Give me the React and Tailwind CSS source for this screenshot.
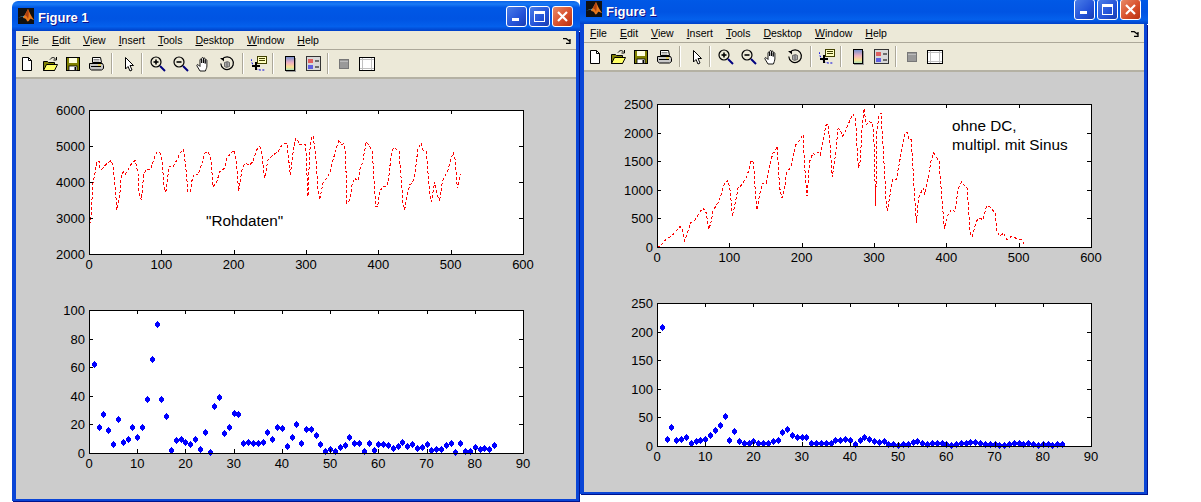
import React from 'react'

const menus = ['File', 'Edit', 'View', 'Insert', 'Tools', 'Desktop', 'Window', 'Help']

// traced from the figures, in 3x crop coordinates
const rawA = [[148,200],[150,355],[153,370],[155,330],[160,250],[165,225],[172,185],[178,183],[181,205],[186,208],[197,195],[205,188],[214,182],[220,195],[225,245],[232,330],[240,290],[245,225],[252,215],[258,222],[270,200],[280,185],[287,182],[295,220],[298,280],[305,300],[312,225],[320,208],[333,210],[345,170],[352,155],[362,160],[368,185],[372,250],[377,275],[380,270],[388,200],[400,200],[412,180],[420,160],[432,148],[438,200],[445,275],[452,275],[458,235],[465,220],[475,225],[485,195],[495,160],[505,155],[512,170],[515,190],[520,260],[530,250],[540,215],[555,205],[563,170],[570,165],[582,150],[590,185],[597,273],[607,210],[615,190],[630,195],[640,185],[650,150],[660,140],[665,150],[675,235],[685,180],[700,165],[715,155],[730,130],[742,130],[752,225]]
const rawB = [[8,170],[18,115],[24,120],[28,135],[40,133],[48,135],[55,290],[60,155],[65,115],[70,108],[78,160],[85,270],[90,300],[100,250],[110,235],[120,220],[130,180],[148,118],[155,135],[162,130],[167,150],[172,310],[180,300],[188,250],[195,235],[205,243],[212,200],[218,190],[230,125],[240,140],[248,155],[258,320],[264,320],[270,275],[280,258],[292,260],[298,225],[305,160],[312,142],[328,152],[340,310],[345,330],[352,290],[360,255],[368,250],[376,220],[385,145],[395,130],[400,150],[410,155],[420,285],[425,305],[435,245],[442,285],[450,300],[458,245],[475,210],[490,157],[497,180],[503,265],[512,222]]
const rawC = [[142,455],[150,455],[160,445],[170,432],[185,425],[200,408],[212,395],[218,405],[225,438],[235,410],[242,385],[255,378],[265,360],[280,340],[290,355],[297,405],[305,380],[310,350],[318,335],[328,320],[345,265],[355,258],[362,290],[368,365],[378,320],[385,280],[395,272],[412,245],[425,197],[432,205],[438,310],[442,345],[450,300],[458,265],[470,265],[480,210],[490,175],[497,170],[502,155],[510,280],[517,310],[527,270],[530,235],[545,215],[558,150],[565,143],[580,120],[582,165],[585,215],[592,305],[600,200],[610,175],[615,180],[625,172],[632,180],[640,135],[650,88],[655,88],[660,135],[668,248],[678,175],[685,102],[692,105],[698,125],[705,115],[715,90],[730,58],[738,75]]
const rawD = [[20,125],[26,220],[32,200],[36,115],[43,42],[50,90],[58,80],[68,85],[72,110],[78,335],[82,110],[88,60],[94,55],[100,150],[105,240],[110,330],[114,350],[120,305],[130,253],[140,255],[150,200],[165,120],[172,112],[178,135],[185,135],[195,310],[200,385],[207,310],[220,280],[225,300],[235,250],[245,195],[252,175],[268,200],[275,290],[284,402],[292,365],[305,345],[316,350],[325,285],[335,262],[352,280],[362,420],[368,425],[380,380],[388,370],[400,375],[410,335],[420,335],[436,355],[442,410],[450,425],[462,415],[472,435],[485,425],[505,433],[515,435],[525,450]]

const trace = (list, ox, oy) => list.map(([x, y]) => [(x - ox) / 3, (y - oy) / 3])
const lineLeft = [...trace(rawA, 148, 30), ...trace(rawB, -602, 30)]
const lineRight = [...trace(rawC, 142, 28), ...trace(rawD, -578, 28)]

const dotsLeft = [62,18,27.5,16,6,23.5,8,9.5,18,11,18,38,66,90,38,26,2,9,9.5,7.5,6,10,2.5,14.5,1,33,39,14,18,28,27.5,7,7.5,7,7,8,14.5,9.5,18.5,17.5,5,11.5,20,7,17,17,12.5,6,1.5,2.5,1.5,4.5,5.5,11,7,7,1.5,7,2,6,6,5.5,3.5,5,8,5,6,3.5,4,6,2,3,3,5.5,7,0.5,7,1.5,1.5,4,3,3.5,3,5.5]
const dotsRight = [208,12,34,10,13,15,5,8,11,13,20,28,37,53,11,27,8,6,6,8,4.5,6,6,8,10,24,29,20,15,15,15,5,5,6,6,6,11,11,13,11,3,10,15,12,8,7,9,3,3,2,3,3,7,9,5,3,5,5,5,4,2,3,5,5,7,7,5,3,3,3,1,1,3,5,5,3,5,3,2,4,3,2,3,3]

function Plot({ h, xTicks, yTicks, line, dots, yMax, className, children }) {
  const w = 434
  const x0 = 73
  const y0 = 10
  const xMax = xTicks[xTicks.length - 1]
  const yMin = yTicks[0]
  const yTop = yTicks[yTicks.length - 1]
  const px = v => x0 + (v / xMax) * w
  const py = v => y0 + h - ((v - yMin) / (yTop - yMin)) * h
  return (
    <svg width="560" height="176" className={`block ${className}`}>
      <rect x={x0} y={y0} width={w} height={h} fill="#fff" />
      {line && (
        <polyline
          points={line.map(([x, y]) => `${x0 + x},${y0 + y}`).join(' ')}
          fill="none"
          stroke="#f00"
          strokeWidth="1"
          strokeDasharray="3 2"
          shapeRendering="crispEdges"
        />
      )}
      {dots && dots.map((v, i) => {
        const cx = Math.round(px(i + 1))
        const cy = Math.round(py(v))
        return <path key={i} d={`M${cx - 2} ${cy - 1}h1v-1h1v-1h1v1h1v1h1v3h-1v1h-1v1h-1v-1h-1v-1h-1z`} fill="#00f" shapeRendering="crispEdges" />
      })}
      <rect x={x0 + 0.5} y={y0 + 0.5} width={w} height={h} fill="none" stroke="#000" shapeRendering="crispEdges" />
      <g stroke="#000" shapeRendering="crispEdges">
        {xTicks.map(t => (
          <path key={t} d={`M${Math.round(px(t)) + 0.5} ${y0 + h}v-4M${Math.round(px(t)) + 0.5} ${y0}v4`} />
        ))}
        {yTicks.map(t => (
          <path key={t} d={`M${x0} ${Math.round(py(t)) + 0.5}h4M${x0 + w} ${Math.round(py(t)) + 0.5}h-4`} />
        ))}
      </g>
      <g fontFamily='"Liberation Sans", sans-serif' fontSize="13" fill="#000">
        {xTicks.map(t => (
          <text key={t} x={px(t)} y={y0 + h + 15} textAnchor="middle">{t}</text>
        ))}
        {yTicks.map(t => (
          <text key={t} x={x0 - 4} y={py(t) + 5} textAnchor="end">{t}</text>
        ))}
      </g>
      <g fontFamily='"Liberation Sans", sans-serif' fontSize="15.3" fill="#000">{children}</g>
    </svg>
  )
}

function Ico({ children }) {
  return (
    <div className="w-[23px] flex justify-center">
      <svg width="16" height="16" viewBox="0 0 16 16">{children}</svg>
    </div>
  )
}

const Sep = ({ className }) => <div className={`w-[2px] h-[21px] bg-white border-l border-[#aca899] ${className}`} />

function Magnifier({ plus }) {
  return (
    <Ico>
      <circle cx="6" cy="6" r="5" fill="#ece9d8" stroke="#000" strokeWidth="1.2" />
      <path d="M3.5 6h5" stroke="#000" strokeWidth="1.6" />
      {plus && <path d="M6 3.5v5" stroke="#000" strokeWidth="1.6" />}
      <path d="M10 10l5 5" stroke="#000080" strokeWidth="2" />
    </Ico>
  )
}

function Toolbar() {
  return (
    <div className="h-[27px] flex items-center -ml-px">
      <Ico><path d="M3.5 1.5h6l3 3v10h-9z" fill="#fff" stroke="#000" /><path d="M9.5 1.5v3h3" fill="none" stroke="#000" /></Ico>
      <Ico>
        <path d="M1.5 5.5h4l1 1h6v8h-11z" fill="#808000" stroke="#000" />
        <path d="M1.5 14.5l3-6h11l-3 6z" fill="#ffff66" stroke="#000" />
        <path d="M8 3.5c2-2.5 4-2.5 5.5-.5M14.5 1v3h-3" fill="none" stroke="#000" />
      </Ico>
      <Ico>
        <rect x="1.5" y="1.5" width="13" height="13" fill="#808000" stroke="#000" />
        <rect x="4" y="2" width="8" height="5" fill="#ffffe0" />
        <rect x="4" y="10" width="8" height="4.5" fill="#fff" stroke="#000" strokeWidth="0.8" />
        <rect x="9.5" y="11" width="1.5" height="3" fill="#000" />
      </Ico>
      <Ico>
        <path d="M4.5 1.5h8l1 5h-9z" fill="#fff" stroke="#000" />
        <path d="M5.5 3.5h6M5.5 5h6" stroke="#888" />
        <path d="M1.5 7.5h13l1 2v3l-2 1.5h-10l-2-1.5z" fill="#c8c8c8" stroke="#000" />
        <path d="M3 10.5h10" stroke="#000" />
        <rect x="10" y="8.5" width="3" height="1" fill="#ffd800" />
      </Ico>
      <Sep className="ml-[4px] mr-[4px]" />
      <Ico><path d="M4.5 1.5v11.5l2.5-2.5 2 4.5 2-1-2-4.5h3.5z" fill="#fff" stroke="#000" /></Ico>
      <Sep className="ml-px mr-[3px]" />
      <Magnifier plus />
      <Magnifier />
      <Ico>
        <path d="M4 15l-3-5c-.6-1.2.6-2 1.500-1L4 10.500V4c0-1.300 1.700-1.300 1.700 0v3V2.500c0-1.300 1.800-1.300 1.800 0V7V3c0-1.300 1.700-1.300 1.700 0v4.500V4.500c0-1.200 1.700-1.200 1.700 0V10c0 2-1 3-1.500 5z" fill="#fff" stroke="#000" strokeWidth="0.9" />
      </Ico>
      <Ico>
        <path d="M3 3.500a6.300 6.300 0 1 1-1.200 4" fill="none" stroke="#000" strokeWidth="1.200" />
        <path d="M1 2h4v3.500z" fill="#000" />
        <path d="M5.500 6.500l3-1 2 1v4l-3 1-2-1z" fill="#aaa" stroke="#444" strokeWidth="0.7" />
        <path d="M8 6v5" stroke="#444" strokeWidth="0.7" />
      </Ico>
      <Sep className="ml-[4px] mr-[3px]" />
      <Ico>
        <path d="M0 3c1 5 3 10 9 11h5" fill="none" stroke="#0000e0" strokeDasharray="2 1.500" />
        <rect x="6.500" y="0.500" width="9" height="7" fill="#ffffc0" stroke="#404000" />
        <path d="M8 2.500h6M8 4.500h6" stroke="#404000" />
        <path d="M5 6v8M1 10h8" stroke="#000" strokeWidth="2" />
      </Ico>
      <Sep className="ml-[2px] mr-[4px]" />
      <Ico>
        <defs>
          <linearGradient id="cbar" x1="0" y1="0" x2="0" y2="1">
            <stop offset="0" stopColor="#6f8fd0" />
            <stop offset="0.45" stopColor="#f0b0c0" />
            <stop offset="0.75" stopColor="#f8e090" />
            <stop offset="1" stopColor="#a0e0c0" />
          </linearGradient>
        </defs>
        <rect x="4" y="2" width="10" height="14" fill="#999" />
        <rect x="3.500" y="0.500" width="9" height="14" fill="url(#cbar)" stroke="#000" />
      </Ico>
      <Ico>
        <rect x="1.500" y="0.500" width="14" height="14" fill="#d8d8d8" stroke="#333" />
        <rect x="3" y="3" width="5" height="4" fill="#e06060" />
        <rect x="3" y="9" width="5" height="4" fill="#6060e0" />
        <path d="M10 5h4M10 11h4" stroke="#000" />
      </Ico>
      <Sep className="ml-[3px] mr-[3px]" />
      <Ico>
        <rect x="3.500" y="3.500" width="9" height="9" fill="#999" stroke="#777" />
        <path d="M4 5.500h8" stroke="#bbb" />
      </Ico>
      <Ico>
        <rect x="0.500" y="1.500" width="15" height="13" fill="#fff" stroke="#000" />
        <path d="M1 3.500h14M1 12.500h14M3.500 2v12M12.500 2v12" stroke="#c0c0c0" />
      </Ico>
    </div>
  )
}

function Figure({ className, titleShift, bodyPad, plots }) {
  return (
    <div className={`absolute w-[568px] h-[501px] flex flex-col ${className}`}>
      <div className="h-[30px] shrink-0 rounded-t-[6px] flex items-center pl-[6px] pr-[7px] bg-[linear-gradient(180deg,#0a62e8_0%,#1a7af5_10%,#0058e6_22%,#0054e3_60%,#0460ec_85%,#0040c8_100%)]">
        <svg width="16" height="16" viewBox="0 0 16 16" className="shrink-0">
          <rect width="16" height="16" fill="#111" />
          <path d="M0 10l4-2 2 2 2-3z" fill="#4aa0d0" />
          <path d="M5 10l5-9c1.500 3 3 7 6 11-2-.5-3-2-4-1-1 2-2 3-3 2-.5-2-2-3-4-3z" fill="#e8791c" />
          <path d="M10 1c1 3 1 6 0 10-1-3-2-3-3-4z" fill="#b04010" />
        </svg>
        <span className={`ml-[4px] text-white font-bold text-[13px] [font-family:'Liberation_Sans',sans-serif] [text-shadow:1px_1px_#0f1089] ${titleShift}`}>Figure 1</span>
        <div className="ml-auto flex gap-[2px]">
          <div className="w-[21px] h-[21px] rounded-[3px] border border-white bg-[linear-gradient(135deg,#4a7de8,#2352d8_60%,#1a3cb0)] flex items-end p-[4px]">
            <div className="w-[7px] h-[3px] bg-white ml-px mb-px" />
          </div>
          <div className="w-[21px] h-[21px] rounded-[3px] border border-white bg-[linear-gradient(135deg,#4a7de8,#2352d8_60%,#1a3cb0)] flex items-center justify-center">
            <div className="w-[11px] h-[11px] border border-white border-t-[3px]" />
          </div>
          <div className="w-[21px] h-[21px] rounded-[3px] border border-white bg-[linear-gradient(135deg,#e88a68,#d8502c_55%,#b83010)] flex items-center justify-center">
            <svg width="13" height="13" viewBox="0 0 13 13"><path d="M2 2l9 9M11 2l-9 9" stroke="#fff" strokeWidth="2.200" /></svg>
          </div>
        </div>
      </div>
      <div className="flex-1 min-h-0 mr-px mb-px flex flex-col border-l-4 border-r-[3px] border-b-[2px] border-[#0a45d6] shadow-[1px_1px_0_#00138c] bg-[#cccccc]">
        <div className="bg-[#ece9d8] border-b-2 border-b-[#b4b1a3] shrink-0">
          <div className="h-[19px] flex items-center justify-between pl-[6px] pr-[5px] pt-px border-b border-[#aca899]">
            <div className="flex gap-[13px] text-[10.5px] text-black [font-family:'Liberation_Sans',sans-serif]">
              {menus.map(m => (
                <span key={m}><u>{m[0]}</u>{m.slice(1)}</span>
              ))}
            </div>
            <svg width="8" height="6" viewBox="0 0 8 6"><path d="M0 0.500h3l4 3M7 1v4.500H3" fill="none" stroke="#000" strokeWidth="1.300" /></svg>
          </div>
          <Toolbar />
        </div>
        <div className={`flex-1 overflow-hidden ${bodyPad}`}>{plots}</div>
      </div>
    </div>
  )
}

const xBig = [0, 100, 200, 300, 400, 500, 600]
const xSmall = [0, 10, 20, 30, 40, 50, 60, 70, 80, 90]

export default function App() {
  return (
    <div className="relative w-[1201px] h-[502px] bg-white overflow-hidden">
      <Figure
        className="left-[12px] top-[1px]"
        titleShift="mt-[4px]"
        bodyPad="pt-[21px]"
        plots={
          <>
            <Plot h={144} xTicks={xBig} yTicks={[2000, 3000, 4000, 5000, 6000]} line={lineLeft}>
              <text x="190" y="126">"Rohdaten"</text>
            </Plot>
            <Plot h={143} xTicks={xSmall} yTicks={[0, 20, 40, 60, 80, 100]} dots={dotsLeft} className="mt-[24px]" />
          </>
        }
      />
      <Figure
        className="left-[580px] top-[-6px]"
        titleShift="mt-[5px]"
        bodyPad="pt-[22px]"
        plots={
          <>
            <Plot h={143} xTicks={xBig} yTicks={[0, 500, 1000, 1500, 2000, 2500]} line={lineRight}>
              <text x="368" y="37">ohne DC,</text>
              <text x="368" y="56">multipl. mit Sinus</text>
            </Plot>
            <Plot h={143} xTicks={xSmall} yTicks={[0, 50, 100, 150, 200, 250]} dots={dotsRight} className="mt-[23px]" />
          </>
        }
      />
    </div>
  )
}
